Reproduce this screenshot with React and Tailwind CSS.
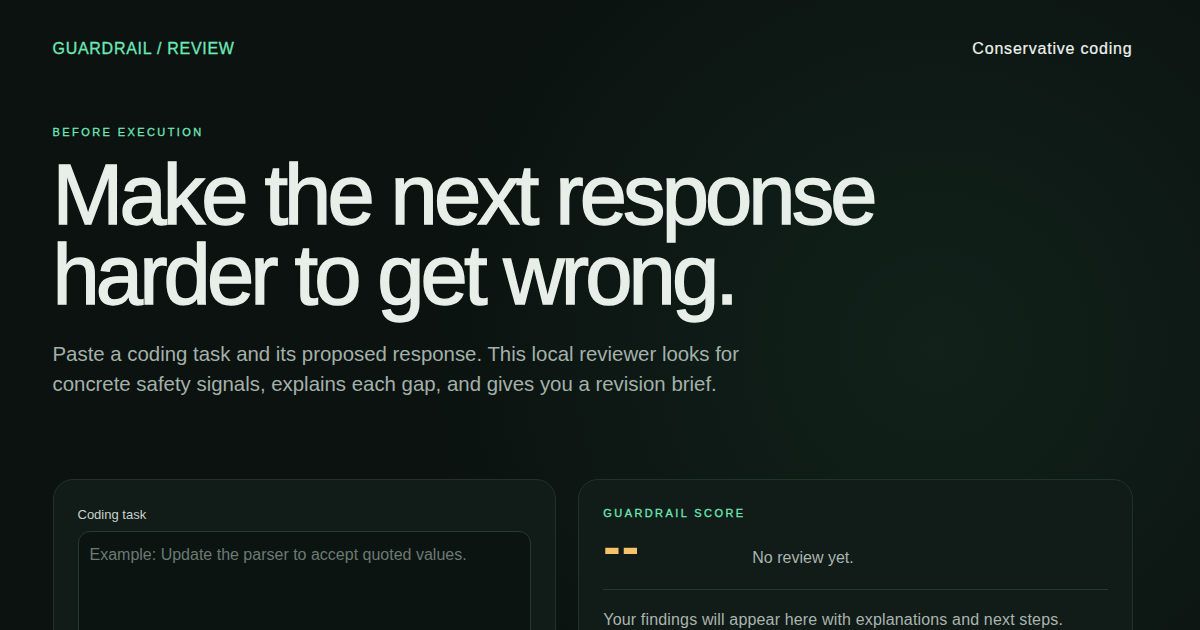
import { useState } from 'react';

export default function App() {
  const [task, setTask] = useState('');
  const [response, setResponse] = useState('');

  return (
    <div
      className="min-h-screen bg-[#0b1210] text-[#e8efe9] pr-[15px]"
      style={{
        fontFamily: '"Liberation Sans", Arial, sans-serif',
        backgroundImage:
          'radial-gradient(circle at 78% 30%, rgba(34, 78, 56, 0.26), transparent 42%)',
      }}
    >
      <div className="max-w-[1080px] mx-auto pb-24">
        <header className="flex items-center justify-between pt-[37px]">
          <span className="text-[16px] tracking-[0.045em] text-[#6ee7b7] [-webkit-text-stroke:0.3px_#6ee7b7]">
            GUARDRAIL / REVIEW
          </span>
          <span className="text-[16px] tracking-[0.05em] font-medium text-[#eef3ef] [-webkit-text-stroke:0.2px_#eef3ef]">
            Conservative coding
          </span>
        </header>

        <section className="pt-[63px]">
          <p className="text-[11px] tracking-[0.22em] text-[#6ee7b7] [-webkit-text-stroke:0.3px_#6ee7b7]">
            BEFORE EXECUTION
          </p>
          <h1 className="mt-[14px] text-[85px] leading-[80px] tracking-[-0.046em] font-normal text-[#e8efe9] [-webkit-text-stroke:1.4px_#e8efe9]">
            Make the next response
            <br />
            harder to get wrong.
          </h1>
          <p className="mt-[24px] max-w-[720px] text-[20.4px] leading-[30px] text-[#a3b1a9]">
            Paste a coding task and its proposed response. This local reviewer looks for concrete safety signals,
            explains each gap, and gives you a revision brief.
          </p>
        </section>

        <section className="mt-[80px] grid grid-cols-[1fr_1.1fr] gap-[22px] items-start">
          <div className="rounded-[20px] border border-[#1f3329] bg-[#111b17] p-6">
            <label className="block text-[13px] font-medium text-[#c8d3cd] mt-[1px]">Coding task</label>
            <textarea
              value={task}
              onChange={(e) => setTask(e.target.value)}
              placeholder="Example: Update the parser to accept quoted values."
              className="mt-[7px] w-full h-[150px] resize-none rounded-[12px] border border-[#233a2f] bg-[#0b1411] px-[11px] py-[11px] text-[16px] text-[#dbe4de] placeholder-[#6b7a73] focus:outline-none"
            />
            <label className="block text-[13px] font-medium text-[#c8d3cd] mt-[20px]">Proposed response</label>
            <textarea
              value={response}
              onChange={(e) => setResponse(e.target.value)}
              placeholder="Paste the plan, diff, or answer you want reviewed."
              className="mt-[7px] w-full h-[220px] resize-none rounded-[12px] border border-[#233a2f] bg-[#0b1411] px-[11px] py-[11px] text-[16px] text-[#dbe4de] placeholder-[#6b7a73] focus:outline-none"
            />
            <div className="mt-5 flex items-center gap-3">
              <button
                type="button"
                className="rounded-[10px] bg-[#6ee7b7] px-5 py-3 text-[15px] font-bold text-[#06130d]"
              >
                Review response
              </button>
              <button
                type="button"
                onClick={() => {
                  setTask('');
                  setResponse('');
                }}
                className="rounded-[10px] border border-[#233a2f] px-5 py-3 text-[15px] font-medium text-[#c8d3cd]"
              >
                Clear
              </button>
            </div>
          </div>

          <div className="rounded-[20px] border border-[#1f3329] bg-[#111b17] px-6 pt-6 pb-7">
            <p className="text-[11px] tracking-[0.22em] text-[#6ee7b7] mt-[1px] [-webkit-text-stroke:0.3px_#6ee7b7]">
              GUARDRAIL SCORE
            </p>
            <div className="mt-[8px] flex items-start">
              <span className="w-[149px] mt-[-11px] text-[52px] leading-[56px] font-bold tracking-[0.02em] text-[#f6c26b]">
                --
              </span>
              <span className="text-[16px] leading-[24px] text-[#aab5af] mt-[17px]">No review yet.</span>
            </div>
            <div className="mt-[15px] border-t border-[#23382e]" />
            <p className="mt-[18px] text-[16px] leading-[24px] tracking-[0.01em] text-[#aab5af]">
              Your findings will appear here with explanations and next steps.
            </p>
          </div>
        </section>
      </div>
    </div>
  );
}
